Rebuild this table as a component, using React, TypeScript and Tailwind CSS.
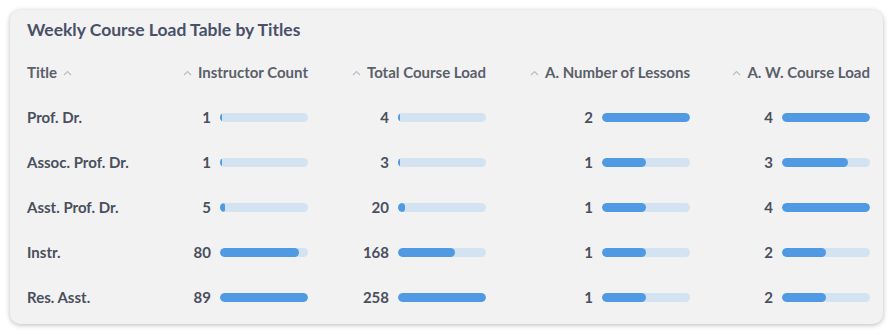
const rows = [
  { title: "Prof. Dr.", count: 1, total: 4, lessons: 2, load: 4 },
  { title: "Assoc. Prof. Dr.", count: 1, total: 3, lessons: 1, load: 3 },
  { title: "Asst. Prof. Dr.", count: 5, total: 20, lessons: 1, load: 4 },
  { title: "Instr.", count: 80, total: 168, lessons: 1, load: 2 },
  { title: "Res. Asst.", count: 89, total: 258, lessons: 1, load: 2 },
]

const max = { count: 89, total: 258, lessons: 2, load: 4 }

function SortIcon() {
  return (
    <svg width="9" height="6" viewBox="0 0 9 6" className="shrink-0">
      <path d="M1 5 L4.5 1.5 L8 5" fill="none" stroke="#b8bcc4" strokeWidth="1.1" />
    </svg>
  )
}

function BarCell({ value, max }: { value: number; max: number }) {
  const w = Math.max(1.5, (value / max) * 88)
  return (
    <div className="flex items-center justify-end gap-[9px]">
      <span>{value}</span>
      <div className="w-[88px] h-[9px] rounded-full bg-[#d4e3f1] overflow-hidden">
        <div className="h-full rounded-full bg-[#4f9ae2]" style={{ width: `${w}px` }} />
      </div>
    </div>
  )
}

export default function App() {
  const cols = "grid grid-cols-[150px_131px_178px_204px_180px] items-center h-[45px]"
  return (
    <div className="w-[893px] h-[335px] bg-white p-[10px]" style={{ fontFamily: "Lato, 'Open Sans', sans-serif" }}>
      <div className="w-[873px] h-[314px] rounded-[10px] bg-[#f2f2f3] shadow-[0_1px_5px_rgba(0,0,0,0.28)] pl-[17px] pr-[13px]">
        <div className="h-[40px] pt-[8px]">
          <h2 className="text-[17.5px] leading-[24px] font-bold text-[#4a5068]">Weekly Course Load Table by Titles</h2>
        </div>
        <div className={`${cols} text-[15px] font-bold text-[#5b5f6a]`}>
          <div className="flex items-center gap-[6px]">
            <span>Title</span>
            <SortIcon />
          </div>
          {["Instructor Count", "Total Course Load", "A. Number of Lessons", "A. W. Course Load"].map((h) => (
            <div key={h} className="flex items-center justify-end gap-[6px]">
              <SortIcon />
              <span>{h}</span>
            </div>
          ))}
        </div>
        {rows.map((r) => (
          <div key={r.title} className={`${cols} text-[15px] font-bold text-[#4a4f5c]`}>
            <div>{r.title}</div>
            <BarCell value={r.count} max={max.count} />
            <BarCell value={r.total} max={max.total} />
            <BarCell value={r.lessons} max={max.lessons} />
            <BarCell value={r.load} max={max.load} />
          </div>
        ))}
      </div>
    </div>
  )
}
